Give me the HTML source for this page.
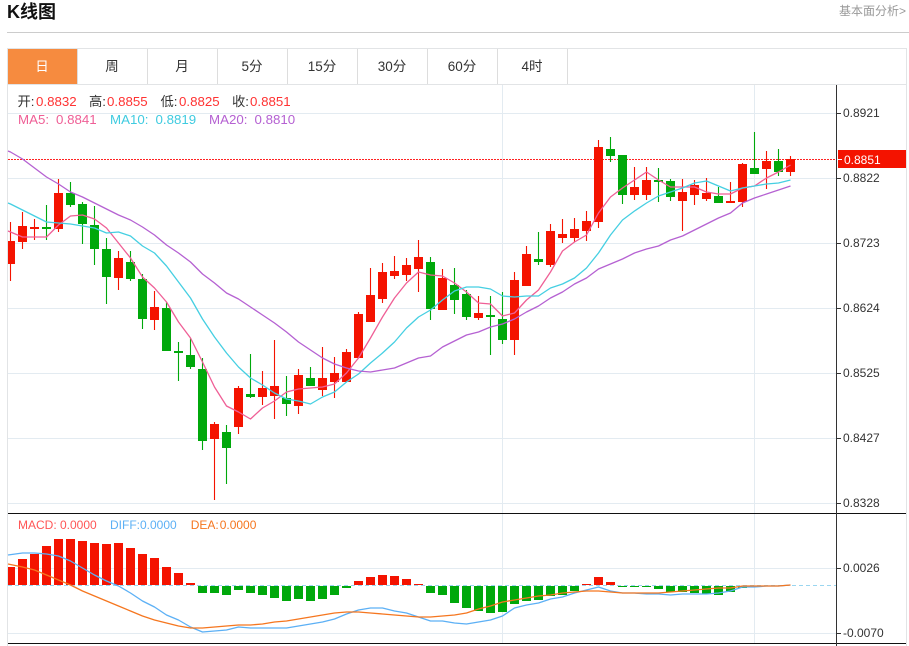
<!DOCTYPE html>
<html lang="zh"><head><meta charset="utf-8"><title>K线图</title>
<style>
html,body{margin:0;padding:0;background:#fff;width:909px;height:646px;overflow:hidden}
svg{display:block;position:absolute;left:0;top:0}
text{font-family:"Liberation Sans","Noto Sans CJK SC",sans-serif}
.ax{font-size:12px;fill:#333}
.t{font-size:13.3px}
.m{font-size:12px}
.tab{font-size:13.5px;fill:#333;text-anchor:middle}
</style></head><body>
<svg width="909" height="646" viewBox="0 0 909 646" xmlns="http://www.w3.org/2000/svg">
<text x="7" y="18" font-size="18" font-weight="700" fill="#111">K线图</text>
<text x="839" y="15" font-size="12" fill="#999">基本面分析&gt;</text>
<path d="M7 32.5H909" stroke="#ccc"/>
<path d="M7 48.5H906.5V646M7.5 48.5V646M7 84.5H906.5" stroke="#e2e4e6" fill="none"/>
<rect x="8" y="49" width="69" height="35" fill="#f68b3f"/>
<path d="M77.5 49V84M147.5 49V84M217.5 49V84M287.5 49V84M357.5 49V84M427.5 49V84M497.5 49V84M567.5 49V84" stroke="#ddd"/>
<text class="tab" x="42" y="71" style="fill:#fff">日</text>
<text class="tab" x="112" y="71">周</text>
<text class="tab" x="182" y="71">月</text>
<text class="tab" x="252" y="71">5分</text>
<text class="tab" x="322" y="71">15分</text>
<text class="tab" x="392" y="71">30分</text>
<text class="tab" x="462" y="71">60分</text>
<text class="tab" x="532" y="71">4时</text>

<!-- grid -->
<path d="M8 113.5H836M8 178.5H836M8 243.5H836M8 308.5H836M8 373.5H836M8 438.5H836M8 503.5H836M8 568.5H836M8 633.5H836M502.5 85V643M754.5 85V643" stroke="#e3ebf1" fill="none"/>
<path d="M8 159.5H836" stroke="#f22" stroke-dasharray="2 1" fill="none"/>

<!-- wicks red -->
<path fill="none" stroke="#f41300" stroke-width="1.1" d="M10.5 222V281M22.5 212V249M34.5 219V240M58.5 179V232M118.5 251V290M154.5 291V330M214.5 422V500M238.5 386V434M262.5 371V405M274.5 340V419M298.5 369V414M322.5 347V396M334.5 357V398M346.5 349V382M358.5 312V358M370.5 268V322M382.5 263V303M394.5 256V279M406.5 258V281M418.5 240V292M442.5 269V310M478.5 296V320M514.5 272V355M526.5 246V286M550.5 224V267M562.5 219V243M574.5 218V242M586.5 211V241M598.5 140V228M634.5 167V200M646.5 167V200M682.5 179V231M694.5 180V205M706.5 178V201M730.5 182V203M742.5 163V207M766.5 151V189M790.5 156V176"/>
<!-- wicks green -->
<path fill="none" stroke="#00a80b" stroke-width="1.1" d="M46.5 205V240M70.5 182V207M82.5 202V244M94.5 206V265M106.5 238V304M130.5 251V281M142.5 274V329M166.5 302V351M178.5 342V381M190.5 338V369M202.5 358V450M226.5 425V484M250.5 354V398M286.5 376V416M310.5 367V386M430.5 257V320M454.5 268V314M466.5 290V320M490.5 296V355M502.5 292V344M538.5 232V265M610.5 137V162M622.5 155V204M658.5 168V202M670.5 179V201M718.5 187V203M754.5 132V174M778.5 149V176"/>
<!-- bodies red -->
<path fill="#f41300" d="M8 241h7V264h-7zM18 226h9V242h-9zM30 227h9V229h-9zM54 193h9V229h-9zM114 258h9V278h-9zM150 307h9V320h-9zM210 424h9V439h-9zM234 388h9V427h-9zM258 388h9V397h-9zM270 386h9V396h-9zM294 375h9V406h-9zM318 378h9V390h-9zM330 373h9V382h-9zM342 352h9V382h-9zM354 314h9V358h-9zM366 295h9V322h-9zM378 272h9V299h-9zM390 271h9V276h-9zM402 265h9V275h-9zM414 257h9V269h-9zM438 278h9V310h-9zM474 313h9V318h-9zM510 280h9V340h-9zM522 254h9V286h-9zM546 231h9V265h-9zM558 234h9V238h-9zM570 229h9V238h-9zM582 221h9V231h-9zM594 147h9V222h-9zM630 187h9V195h-9zM642 180h9V195h-9zM678 192h9V201h-9zM690 185h9V195h-9zM702 193h9V199h-9zM726 201h9V203h-9zM738 164h9V202h-9zM762 161h9V169h-9zM786 159h9V172h-9z"/>
<!-- bodies green -->
<path fill="#00a80b" d="M42 227h9V229h-9zM66 193h9V205h-9zM78 204h9V224h-9zM90 225h9V249h-9zM102 249h9V277h-9zM126 262h9V279h-9zM138 279h9V319h-9zM162 308h9V351h-9zM174 351h9V353h-9zM186 355h9V367h-9zM198 369h9V441h-9zM222 432h9V448h-9zM246 394h9V397h-9zM282 398h9V404h-9zM306 378h9V386h-9zM426 262h9V309h-9zM450 285h9V300h-9zM462 294h9V317h-9zM486 315h9V317h-9zM498 319h9V340h-9zM534 259h9V262h-9zM606 149h9V156h-9zM618 155h9V195h-9zM654 180h9V182h-9zM666 181h9V197h-9zM714 196h9V203h-9zM750 168h9V174h-9zM774 161h9V172h-9z"/>

<!-- MA lines -->
<g fill="none" stroke-width="1.3" stroke-linejoin="round">
<polyline stroke="#ef5f96" points="8,231 10.5,232 22.5,237 34.5,237 46.5,237 58.5,225 70.5,216 82.5,215 94.5,219 106.5,228 118.5,243 130.5,258 142.5,277 154.5,288 166.5,302 178.5,322 190.5,338 202.5,362 214.5,387 226.5,406 238.5,412 250.5,419 262.5,408 274.5,401 286.5,392 298.5,389 310.5,388 322.5,387 334.5,384 346.5,373 358.5,358 370.5,338 382.5,317 394.5,298 406.5,283 418.5,272 430.5,275 442.5,276 454.5,283 466.5,292 478.5,303 490.5,304 502.5,316 514.5,313 526.5,300 538.5,290 550.5,272 562.5,251 574.5,242 586.5,235 598.5,213 610.5,197 622.5,188 634.5,180 646.5,172 658.5,180 670.5,187 682.5,187 694.5,187 706.5,192 718.5,194 730.5,194 742.5,188 754.5,186 766.5,178 778.5,172 790.5,165"/>
<polyline stroke="#45cfe2" points="8,203 10.5,204 22.5,210 34.5,216 46.5,222 58.5,223 70.5,224 82.5,226 94.5,228 106.5,233 118.5,232 130.5,236 142.5,246 154.5,253 166.5,266 178.5,282 190.5,298 202.5,319 214.5,337 226.5,353 238.5,367 250.5,378 262.5,385 274.5,393 286.5,399 298.5,401 310.5,404 322.5,397 334.5,392 346.5,382 358.5,374 370.5,363 382.5,353 394.5,342 406.5,328 418.5,317 430.5,310 442.5,300 454.5,291 466.5,287 478.5,287 490.5,289 502.5,296 514.5,297 526.5,296 538.5,296 550.5,288 562.5,284 574.5,278 586.5,268 598.5,253 610.5,235 622.5,220 634.5,211 646.5,203 658.5,196 670.5,192 682.5,188 694.5,183 706.5,181 718.5,186 730.5,191 742.5,188 754.5,186 766.5,184 778.5,183 790.5,180"/>
<polyline stroke="#b561d2" points="8,151 10.5,152 22.5,159 34.5,168 46.5,177 58.5,184 70.5,192 82.5,197 94.5,203 106.5,209 118.5,215 130.5,220 142.5,227 154.5,235 166.5,245 178.5,253 190.5,262 202.5,274 214.5,283 226.5,293 238.5,299 250.5,307 262.5,315 274.5,323 286.5,332 298.5,342 310.5,350 322.5,358 334.5,364 346.5,368 358.5,371 370.5,372 382.5,370 394.5,368 406.5,363 418.5,358 430.5,356 442.5,347 454.5,341 466.5,335 478.5,332 490.5,327 502.5,324 514.5,319 526.5,312 538.5,306 550.5,298 562.5,292 574.5,284 586.5,278 598.5,269 610.5,264 622.5,259 634.5,253 646.5,249 658.5,246 670.5,240 682.5,236 694.5,230 706.5,224 718.5,218 730.5,213 742.5,203 754.5,198 766.5,194 778.5,190 790.5,186"/>
</g>

<!-- MACD bars -->
<path fill="#f41300" d="M8 567h7V585h-7zM18 559h9V585h-9zM30 554h9V585h-9zM42 546h9V585h-9zM54 539h9V585h-9zM66 539h9V585h-9zM78 541h9V585h-9zM90 543h9V585h-9zM102 544h9V585h-9zM114 543h9V585h-9zM126 548h9V585h-9zM138 554h9V585h-9zM150 558h9V585h-9zM162 567h9V585h-9zM174 573h9V585h-9zM186 583h9V585h-9zM354 581h9V585h-9zM366 577h9V585h-9zM378 575h9V585h-9zM390 576h9V585h-9zM402 579h9V585h-9zM414 584h9V585h-9zM582 584h9V585h-9zM594 577h9V585h-9zM606 582h9V585h-9z"/>
<path fill="#00a80b" d="M198 586h9V593h-9zM210 586h9V593h-9zM222 586h9V595h-9zM234 586h9V590h-9zM246 586h9V593h-9zM258 586h9V595h-9zM270 586h9V598h-9zM282 586h9V601h-9zM294 586h9V599h-9zM306 586h9V601h-9zM318 586h9V599h-9zM330 586h9V595h-9zM342 586h9V588h-9zM426 586h9V593h-9zM438 586h9V595h-9zM450 586h9V603h-9zM462 586h9V608h-9zM474 586h9V611h-9zM486 586h9V613h-9zM498 586h9V612h-9zM510 586h9V604h-9zM522 586h9V601h-9zM534 586h9V600h-9zM546 586h9V596h-9zM558 586h9V595h-9zM570 586h9V591h-9zM618 586h9V587h-9zM630 586h9V587h-9zM642 586h9V587h-9zM654 586h9V589h-9zM666 586h9V592h-9zM678 586h9V592h-9zM690 586h9V593h-9zM702 586h9V594h-9zM714 586h9V595h-9zM726 586h9V592h-9zM738 586h9V588h-9zM750 586h9V587h-9z"/>
<path d="M8 585.5H836" stroke="#9ad6f0" stroke-dasharray="4 3" fill="none"/>
<g fill="none" stroke-width="1.3" stroke-linejoin="round">
<polyline stroke="#5cb0f5" points="8,555 22.5,553 34.5,553 46.5,554 58.5,556 70.5,561 82.5,568 94.5,575 106.5,581 118.5,586 130.5,593 142.5,601 154.5,607 166.5,615 178.5,620 190.5,627 202.5,632 214.5,631 226.5,630 238.5,627 250.5,628 262.5,628 274.5,628 286.5,628 298.5,626 310.5,624 322.5,622 334.5,619 346.5,614 358.5,610 370.5,608 382.5,608 394.5,611 406.5,613 418.5,617 430.5,621 442.5,621 454.5,623 466.5,624 478.5,622 490.5,620 502.5,616 514.5,608 526.5,605 538.5,603 550.5,599 562.5,597 574.5,593 586.5,590 598.5,587 610.5,591 622.5,593 634.5,593 646.5,594 658.5,594 670.5,595 682.5,594 694.5,594 706.5,594 718.5,593 730.5,591 742.5,587 754.5,587 766.5,586 778.5,586 790.5,585"/>
<polyline stroke="#f5761f" points="8,564 22.5,567 34.5,570 46.5,575 58.5,580 70.5,585 82.5,591 94.5,596 106.5,601 118.5,606 130.5,611 142.5,616 154.5,620 166.5,623 178.5,626 190.5,628 202.5,628 214.5,627 226.5,626 238.5,625 250.5,625 262.5,624 274.5,622 286.5,621 298.5,619 310.5,617 322.5,615 334.5,613 346.5,612 358.5,612 370.5,613 382.5,614 394.5,615 406.5,616 418.5,617 430.5,617 442.5,616 454.5,615 466.5,613 478.5,609 490.5,606 502.5,602 514.5,600 526.5,598 538.5,596 550.5,595 562.5,593 574.5,592 586.5,591 598.5,591 610.5,592 622.5,593 634.5,593 646.5,593 658.5,593 670.5,592 682.5,591 694.5,590 706.5,589 718.5,588 730.5,588 742.5,586 754.5,586 766.5,586 778.5,586 790.5,585"/>
</g>

<!-- separators + axis -->
<path d="M8 513.5H906M8 643.5H906" stroke="#111" fill="none"/>
<path d="M836.5 85V646" stroke="#333" fill="none"/>
<path d="M836 113.5H841M836 178.5H841M836 243.5H841M836 308.5H841M836 373.5H841M836 438.5H841M836 503.5H841M836 568.5H841M836 633.5H841" stroke="#333" fill="none"/>

<text class="ax" x="843" y="117">0.8921</text>
<text class="ax" x="843" y="182">0.8822</text>
<text class="ax" x="843" y="247">0.8723</text>
<text class="ax" x="843" y="312">0.8624</text>
<text class="ax" x="843" y="377">0.8525</text>
<text class="ax" x="843" y="442">0.8427</text>
<text class="ax" x="843" y="507">0.8328</text>
<text class="ax" x="843" y="572">0.0026</text>
<text class="ax" x="843" y="637">-0.0070</text>

<rect x="838" y="150" width="68" height="18" fill="#f41300"/>
<path d="M838 159.5H842" stroke="#fff" fill="none"/>
<text x="844" y="164" font-size="12" fill="#fff">0.8851</text>

<!-- legend -->
<g class="t">
<text class="t" x="17.5" y="106" fill="#333">开:</text><text class="t" x="36" y="106" fill="#f33">0.8832</text>
<text class="t" x="89" y="106" fill="#333">高:</text><text class="t" x="107" y="106" fill="#f33">0.8855</text>
<text class="t" x="160.5" y="106" fill="#333">低:</text><text class="t" x="179" y="106" fill="#f33">0.8825</text>
<text class="t" x="232" y="106" fill="#333">收:</text><text class="t" x="250" y="106" fill="#f33">0.8851</text>
<text class="t" x="18" y="124" fill="#ef5f96">MA5:</text><text class="t" x="56" y="124" fill="#ef5f96">0.8841</text>
<text class="t" x="110" y="124" fill="#3fcbe0">MA10:</text><text class="t" x="155.5" y="124" fill="#3fcbe0">0.8819</text>
<text class="t" x="209" y="124" fill="#b561d2">MA20:</text><text class="t" x="254.5" y="124" fill="#b561d2">0.8810</text>
</g>
<text class="m" x="18" y="529" fill="#f55">MACD:</text><text class="m" x="60" y="529" fill="#f55">0.0000</text>
<text class="m" x="110" y="529" fill="#5cb0f5">DIFF:</text><text class="m" x="140" y="529" fill="#5cb0f5">0.0000</text>
<text class="m" x="190.7" y="529" fill="#f5761f">DEA:</text><text class="m" x="219.7" y="529" fill="#f5761f">0.0000</text>
</svg>
</body></html>
